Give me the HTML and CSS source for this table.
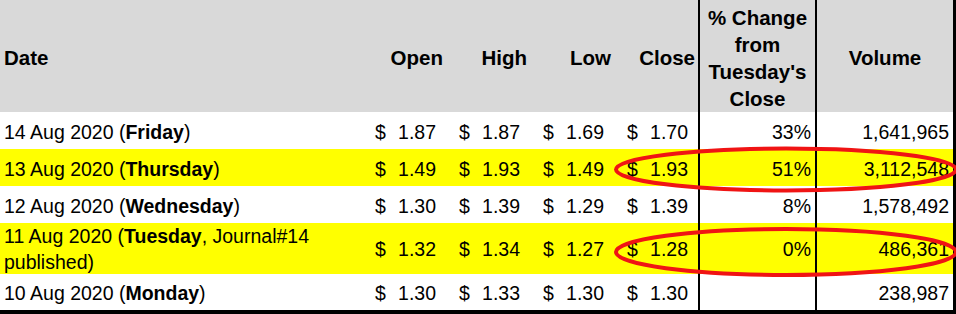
FILE: index.html
```html
<!DOCTYPE html>
<html lang="en">
<head>
  <meta charset="UTF-8">
  <title>Share Price - Week of 10 Aug 2020</title>
  <link rel="stylesheet" href="styles.css">
</head>
<body>

  <div class="sheet">
    <div class="row head">
      <div class="cell date">Date</div>
      <div class="cell num">Open</div>
      <div class="cell num">High</div>
      <div class="cell num">Low</div>
      <div class="cell num">Close</div>
      <div class="cell pct">% Change<br>from<br>Tuesday's<br>Close</div>
      <div class="cell vol">Volume</div>
    </div>

    <div class="row">
      <div class="cell date"><span>14 Aug 2020 (<b>Friday</b>)</span></div>
      <div class="cell acc"><span>$</span><span>1.87</span></div>
      <div class="cell acc"><span>$</span><span>1.87</span></div>
      <div class="cell acc"><span>$</span><span>1.69</span></div>
      <div class="cell acc"><span>$</span><span>1.70</span></div>
      <div class="cell pct">33%</div>
      <div class="cell vol">1,641,965</div>
    </div>

    <div class="row yellow">
      <div class="cell date"><span>13 Aug 2020 (<b>Thursday</b>)</span></div>
      <div class="cell acc"><span>$</span><span>1.49</span></div>
      <div class="cell acc"><span>$</span><span>1.93</span></div>
      <div class="cell acc"><span>$</span><span>1.49</span></div>
      <div class="cell acc"><span>$</span><span>1.93</span></div>
      <div class="cell pct">51%</div>
      <div class="cell vol">3,112,548</div>
    </div>

    <div class="row">
      <div class="cell date"><span>12 Aug 2020 (<b>Wednesday</b>)</span></div>
      <div class="cell acc"><span>$</span><span>1.30</span></div>
      <div class="cell acc"><span>$</span><span>1.39</span></div>
      <div class="cell acc"><span>$</span><span>1.29</span></div>
      <div class="cell acc"><span>$</span><span>1.39</span></div>
      <div class="cell pct">8%</div>
      <div class="cell vol">1,578,492</div>
    </div>

    <div class="row yellow tall">
      <div class="cell date"><span>11 Aug 2020 (<b>Tuesday</b>, Journal#14 published)</span></div>
      <div class="cell acc"><span>$</span><span>1.32</span></div>
      <div class="cell acc"><span>$</span><span>1.34</span></div>
      <div class="cell acc"><span>$</span><span>1.27</span></div>
      <div class="cell acc"><span>$</span><span>1.28</span></div>
      <div class="cell pct">0%</div>
      <div class="cell vol">486,361</div>
    </div>

    <div class="row last">
      <div class="cell date"><span>10 Aug 2020 (<b>Monday</b>)</span></div>
      <div class="cell acc"><span>$</span><span>1.30</span></div>
      <div class="cell acc"><span>$</span><span>1.33</span></div>
      <div class="cell acc"><span>$</span><span>1.30</span></div>
      <div class="cell acc"><span>$</span><span>1.30</span></div>
      <div class="cell pct"></div>
      <div class="cell vol">238,987</div>
    </div>

    <!-- hand drawn circles over the close / change / volume cells -->
    <svg class="marks" width="956" height="314" viewBox="0 0 956 314">
      <ellipse cx="786" cy="169.5" rx="170" ry="21" />
      <ellipse cx="786" cy="252" rx="170" ry="23" />
    </svg>
  </div>

</body>
</html>
```

FILE: styles.css
```css
body {
  margin: 0;
  background-color: #ffffff;
  font-family: "Liberation Sans", Arial, sans-serif;
  color: #000000;
}

.sheet {
  position: relative;
  width: 953px;
  border-right: 3px solid #000000;
  border-bottom: 4px solid #000000;
  font-size: 19.5px;
}

.row {
  display: grid;
  grid-template-columns: 362px 84px 84px 84px 84px 117px 138px;
  height: 37px;
  line-height: 26px;
}

.row.tall {
  height: 51px;
}

.row.last {
  height: 36px;
}

.yellow {
  background-color: #ffff00;
}

.head {
  height: 112px;
  background-color: #d9d9d9;
  font-weight: bold;
  font-size: 20.5px;
  line-height: 27px;
}

.cell {
  display: flex;
  align-items: center;
  box-sizing: border-box;
  padding-top: 2px;
  white-space: nowrap;
}

.tall .cell {
  padding-top: 0;
}

.head .cell {
  padding-top: 3px;
}

.date {
  padding-left: 4px;
  white-space: normal;
}

.num {
  justify-content: flex-end;
  padding-right: 3px;
}

.acc {
  justify-content: space-between;
  padding-left: 13px;
  padding-right: 10px;
}

.pct,
.vol {
  border-left: 2px solid #000000;
  justify-content: flex-end;
  padding-right: 4px;
}

.head .pct,
.head .vol {
  justify-content: center;
  text-align: center;
  padding-right: 0;
}

.marks {
  position: absolute;
  top: 0;
  left: 0;
  overflow: visible;
  pointer-events: none;
}

.marks ellipse {
  fill: none;
  stroke: #f01414;
  stroke-width: 4;
}
```
